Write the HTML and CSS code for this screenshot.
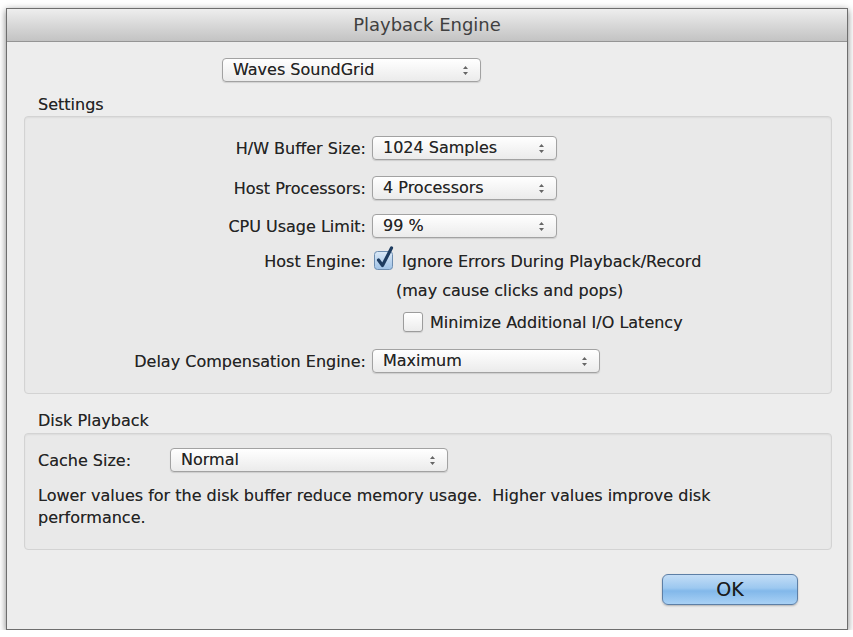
FILE: index.html
```html
<!DOCTYPE html>
<html>
<head>
<meta charset="utf-8">
<link rel="stylesheet" href="styles.css">
</head>
<body>
<div class="window">
  <div class="titlebar">Playback Engine</div>
  <div class="content">
    <div class="select engine"><span>Waves SoundGrid</span><svg class="arrows" width="7" height="11" viewBox="0 0 7 11"><path d="M3.5 1 L6 4 L1 4 Z M3.5 10 L6 7 L1 7 Z" fill="#666"/></svg></div>

    <div class="group-label">Settings</div>
    <div class="group settings">
      <div class="row r1"><span class="label">H/W Buffer Size:</span><div class="select w-short"><span>1024 Samples</span><svg class="arrows" width="7" height="11" viewBox="0 0 7 11"><path d="M3.5 1 L6 4 L1 4 Z M3.5 10 L6 7 L1 7 Z" fill="#666"/></svg></div></div>
      <div class="row r2"><span class="label">Host Processors:</span><div class="select w-short"><span>4 Processors</span><svg class="arrows" width="7" height="11" viewBox="0 0 7 11"><path d="M3.5 1 L6 4 L1 4 Z M3.5 10 L6 7 L1 7 Z" fill="#666"/></svg></div></div>
      <div class="row r3"><span class="label">CPU Usage Limit:</span><div class="select w-short"><span>99 %</span><svg class="arrows" width="7" height="11" viewBox="0 0 7 11"><path d="M3.5 1 L6 4 L1 4 Z M3.5 10 L6 7 L1 7 Z" fill="#666"/></svg></div></div>
      <div class="row r4"><span class="label">Host Engine:</span>
        <div class="check-line">
          <svg class="checkbox checked" width="24" height="26" viewBox="0 0 24 26">
            <defs><linearGradient id="cb" x1="0" y1="0" x2="0" y2="1"><stop offset="0" stop-color="#dbe9f7"/><stop offset="1" stop-color="#9fc2e6"/></linearGradient></defs>
            <rect x="1.5" y="6.5" width="18" height="18" rx="3" fill="url(#cb)" stroke="#6d8db0"/>
            <path d="M5.5 15 L9.5 20.5 L18.5 3" fill="none" stroke="#1e3c60" stroke-width="3.2" stroke-linecap="round" stroke-linejoin="round"/>
          </svg>
          <span>Ignore Errors During Playback/Record</span>
        </div>
      </div>
      <div class="row r5"><span class="label"></span><span class="note">(may cause clicks and pops)</span></div>
      <div class="row r6"><span class="label"></span>
        <div class="check-line minimize">
          <span class="box"></span>
          <span>Minimize Additional I/O Latency</span>
        </div>
      </div>
      <div class="row r7"><span class="label">Delay Compensation Engine:</span><div class="select w-long"><span>Maximum</span><svg class="arrows" width="7" height="11" viewBox="0 0 7 11"><path d="M3.5 1 L6 4 L1 4 Z M3.5 10 L6 7 L1 7 Z" fill="#666"/></svg></div></div>
    </div>

    <div class="group-label disk-label">Disk Playback</div>
    <div class="group disk">
      <div class="cache-row"><span class="cache-label">Cache Size:</span><div class="select w-cache"><span>Normal</span><svg class="arrows" width="7" height="11" viewBox="0 0 7 11"><path d="M3.5 1 L6 4 L1 4 Z M3.5 10 L6 7 L1 7 Z" fill="#666"/></svg></div></div>
      <p class="desc">Lower values for the disk buffer reduce memory usage.&nbsp; Higher values improve disk performance.</p>
    </div>

    <div class="buttons"><div class="ok">OK</div></div>
  </div>
</div>
</body>
</html>
```

FILE: styles.css
```css
html, body {
  margin: 0;
  padding: 0;
  background: #ffffff;
}
body {
  font-family: "DejaVu Sans", "Liberation Sans", sans-serif;
  font-size: 16px;
  color: #242424;
  padding: 8px 5px 0 6px;
}
.window {
  box-sizing: border-box;
  width: 842px;
  height: 622px;
  border: 1px solid #6e6e6e;
  background: #ededed;
  box-shadow: 0 2px 7px rgba(0,0,0,0.5);
  display: flex;
  flex-direction: column;
}
.titlebar {
  height: 32px;
  border-bottom: 1px solid #959595;
  background: linear-gradient(#eeeeee, #d8d8d8 50%, #c3c3c3);
  text-align: center;
  line-height: 32px;
  font-size: 18px;
  color: #404040;
}
.content {
  padding: 0 15px 0 17px;
  text-shadow: 0 0 0.6px rgba(0,0,0,0.45);
}
.select {
  box-sizing: border-box;
  height: 24px;
  border: 1px solid #a2a2a2;
  border-radius: 4px;
  background: linear-gradient(#ffffff, #f3f3f3 60%, #ebebeb);
  box-shadow: 0 1px 1px rgba(0,0,0,0.12);
  display: flex;
  align-items: center;
  padding: 0 11px 0 10px;
  line-height: 22px;
}
.select .arrows {
  margin-left: auto;
}
.engine {
  margin: 16px 0 0 198px;
  width: 259px;
}
.group-label {
  margin-top: 14px;
  padding-left: 14px;
  line-height: 18px;
  height: 18px;
}
.group {
  box-sizing: border-box;
  border: 1px solid #d3d3d3;
  border-radius: 4px;
  background: #e9e9e9;
  box-shadow: inset 0 1px 2px rgba(0,0,0,0.06);
}
.settings {
  margin-top: 2px;
  padding: 19px 0 20px 0;
}
.row {
  display: flex;
  align-items: center;
  gap: 6px;
}
.row .label {
  width: 341px;
  flex: none;
  text-align: right;
}
.r1, .r2, .r3, .r7 { height: 24px; }
.r2 { margin-top: 16px; }
.r3 { margin-top: 14px; }
.r4 { margin-top: 12px; height: 22px; }
.r5 { margin-top: 8px; height: 20px; }
.r6 { margin-top: 11px; height: 22px; }
.r7 { margin-top: 16px; }
.w-short { width: 185px; }
.w-long { width: 228px; }
.check-line {
  display: flex;
  align-items: center;
}
.checkbox.checked {
  margin: -6px 5px 0 1px;
}
.note {
  padding-left: 24px;
}
.minimize {
  padding-left: 31px;
}
.minimize .box {
  box-sizing: border-box;
  width: 20px;
  height: 20px;
  border: 1px solid #9c9c9c;
  border-radius: 3px;
  background: linear-gradient(#ffffff, #ececec);
  box-shadow: 0 1px 1px rgba(0,0,0,0.1);
  margin-right: 7px;
}
.disk-label {
  margin-top: 18px;
}
.disk {
  margin-top: 3px;
  padding: 14px 13px 20px 13px;
}
.cache-row {
  display: flex;
  align-items: center;
  height: 24px;
}
.cache-label {
  width: 132px;
}
.w-cache { width: 278px; }
.desc {
  margin: 13px 0 0 0;
  line-height: 22px;
}
.buttons {
  display: flex;
  justify-content: flex-end;
  padding-right: 34px;
  margin-top: 24px;
}
.ok {
  box-sizing: border-box;
  width: 136px;
  height: 31px;
  border: 1px solid #5d7fa6;
  border-radius: 6px;
  background: linear-gradient(#c3ddf6, #9cc8f0 45%, #82b8ea 55%, #a9d1f5);
  box-shadow: 0 1px 2px rgba(0,0,0,0.25);
  text-align: center;
  line-height: 29px;
  font-size: 19px;
  color: #1b1b1b;
}
```
